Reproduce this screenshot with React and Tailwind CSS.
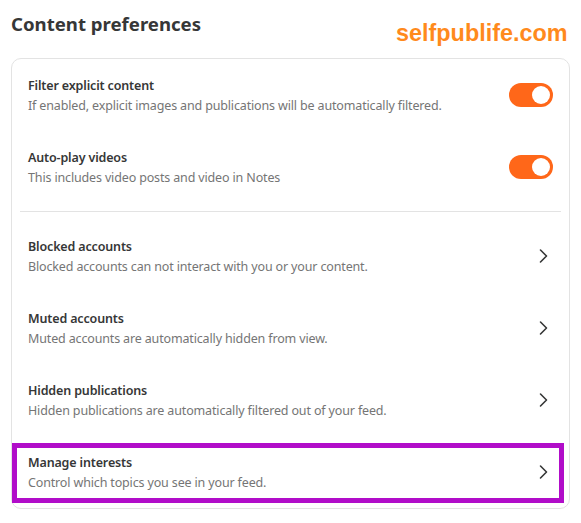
import React from "react";

function Toggle() {
  return (
    <div className="flex h-[24px] w-[44px] shrink-0 items-center justify-end rounded-full bg-[#ff6719] px-[3px]">
      <div className="h-[18px] w-[18px] rounded-full bg-white" />
    </div>
  );
}

function Chevron() {
  return (
    <svg width="20" height="20" viewBox="0 0 20 20" fill="none" className="shrink-0">
      <path d="M7.5 4 L13.5 10 L7.5 16" stroke="#363737" strokeWidth="1.6" strokeLinecap="round" strokeLinejoin="round" />
    </svg>
  );
}

function Row({ title, desc, right }) {
  return (
    <div className="flex h-[72px] items-center justify-between gap-4 px-[16px]">
      <div className="flex flex-col pt-[2px]">
        <div className="text-[12.5px] leading-[20px] font-semibold tracking-[-0.15px] text-[#363737]">{title}</div>
        <div className="text-[12.5px] leading-[20px] tracking-[-0.15px] text-[#757575]">{desc}</div>
      </div>
      {right}
    </div>
  );
}

export default function App() {
  return (
    <div
      className="relative h-[523px] w-[581px] bg-white"
      style={{ fontFamily: '"Noto Sans", "Open Sans", sans-serif' }}
    >
      <div className="flex flex-col px-[11px] pt-[10px]">
        <h1 className="h-[48px] text-[18.6px] leading-[28px] font-bold text-[#363737]">Content preferences</h1>
        <div className="overflow-hidden rounded-[10px] border border-[#e3e3e3]">
          <Row title="Filter explicit content" desc="If enabled, explicit images and publications will be automatically filtered." right={<Toggle />} />
          <Row title="Auto-play videos" desc="This includes video posts and video in Notes" right={<Toggle />} />
          <div className="mx-[8px] my-[8px] h-px bg-[#e3e3e3]" />
          <Row title="Blocked accounts" desc="Blocked accounts can not interact with you or your content." right={<Chevron />} />
          <Row title="Muted accounts" desc="Muted accounts are automatically hidden from view." right={<Chevron />} />
          <Row title="Hidden publications" desc="Hidden publications are automatically filtered out of your feed." right={<Chevron />} />
          <Row title="Manage interests" desc="Control which topics you see in your feed." right={<Chevron />} />
        </div>
      </div>
      <div
        className="absolute left-[396px] top-[18px] text-[23.4px] leading-[30px] font-bold text-[#ff8a1c]"
        style={{ fontFamily: '"Liberation Sans", Arial, sans-serif' }}
      >
        selfpublife.com
      </div>
      <div className="absolute left-[12px] top-[443px] h-[60px] w-[552px] border-[5px] border-[#b10dc9]" />
    </div>
  );
}
